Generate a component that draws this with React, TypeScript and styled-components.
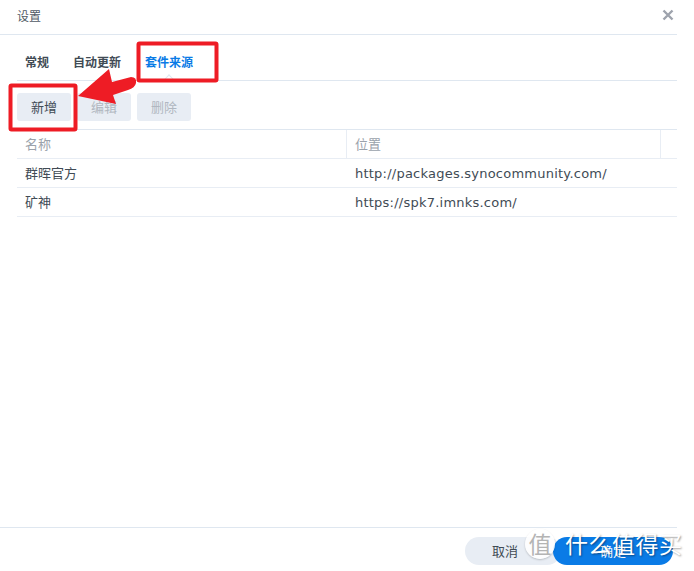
import React from "react";
import styled, { createGlobalStyle } from "styled-components";

const GlobalStyle = createGlobalStyle`
  *, *::before, *::after {
    box-sizing: border-box;
  }
  html, body {
    margin: 0;
    padding: 0;
    background: #fff;
  }
  body {
    font-family: "Liberation Sans", "Noto Sans CJK SC", sans-serif;
  }
`;

const Window = styled.div`
  position: relative;
  width: 694px;
  height: 571px;
  display: flex;
  flex-direction: column;
  overflow: hidden;
  background: #fff;
  color: #414b55;
  font-family: "DejaVu Sans", "Noto Sans CJK SC", sans-serif;
  font-size: 13px;
`;

const TitleBar = styled.header`
  height: 35px;
  margin-right: 17px;
  padding: 0 3px 4px 17px;
  display: flex;
  align-items: center;
  justify-content: space-between;
  border-bottom: 1px solid #dfe7f0;
  font-size: 12px;
  color: #505a64;
`;

const CloseButton = styled.span`
  display: flex;
  color: #9ea3ad;
`;

const Body = styled.main`
  flex: 1;
  padding: 0 17px;
  display: flex;
  flex-direction: column;
`;

const Tabs = styled.nav`
  height: 46px;
  display: flex;
  gap: 24px;
  padding-left: 8px;
  border-bottom: 1px solid #dfe7f0;
`;

const Tab = styled.span<{ $active?: boolean }>`
  position: relative;
  padding-top: 21px;
  font-size: 12px;
  font-weight: 700;
  line-height: 14px;
  color: ${({ $active }) => ($active ? "#0a7be6" : "#414b55")};

  ${({ $active }) =>
    $active &&
    `
    &::after {
      content: "";
      position: absolute;
      left: 20px;
      bottom: -4px;
      width: 8px;
      height: 8px;
      background: #fff;
      border: 1px solid #dfe7f0;
      border-right: 0;
      border-bottom: 0;
      transform: rotate(45deg);
    }
  `}
`;

const Toolbar = styled.div`
  display: flex;
  gap: 6px;
  padding: 12px 0 8px;
`;

const ToolButton = styled.button<{ $disabled?: boolean }>`
  width: 54px;
  height: 28px;
  padding: 0 0 2px;
  border: 0;
  border-radius: 3px;
  background: #e8edf4;
  font-family: inherit;
  font-size: 13px;
  color: ${({ $disabled }) => ($disabled ? "#b0b7c0" : "#414b55")};
`;

const Table = styled.div`
  border-top: 1px solid #dfe7f0;
`;

const Row = styled.div<{ $head?: boolean }>`
  height: 29px;
  display: grid;
  grid-template-columns: 330px 314px 17px;
  align-items: center;
  border-bottom: 1px solid #e8edf4;
  color: ${({ $head }) => ($head ? "#9aa2ab" : "#414b55")};
`;

const Cell = styled.div<{ $head?: boolean }>`
  height: 100%;
  padding: 0 0 2px 8px;
  display: flex;
  align-items: center;
  white-space: nowrap;
  border-right: ${({ $head }) => ($head ? "1px solid #e8edf4" : "0")};
`;

const UrlCell = styled(Cell)`
  padding-bottom: 0;
  letter-spacing: 0.23px;
`;

const Footer = styled.footer`
  height: 44px;
  margin-right: 17px;
  padding: 9px 4px 0 0;
  display: flex;
  justify-content: flex-end;
  border-top: 1px solid #dfe7f0;
`;

const PillButton = styled.button<{ $primary?: boolean }>`
  position: relative;
  height: 28px;
  padding: ${({ $primary }) => ($primary ? "0 0 2px" : "0 16px 2px 0")};
  border: 0;
  border-radius: 14px;
  font-family: inherit;
  font-size: 13px;
  background: ${({ $primary }) => ($primary ? "#0a7be6" : "#e8edf4")};
  color: ${({ $primary }) => ($primary ? "#fff" : "#414b55")};
  width: ${({ $primary }) => ($primary ? "120px" : "96px")};
  margin-left: ${({ $primary }) => ($primary ? "-8px" : "0")};
`;

const Annotation = styled.svg`
  position: absolute;
  inset: 0;
  pointer-events: none;
`;

const WatermarkBadge = styled.span`
  position: absolute;
  left: 525px;
  top: 529px;
  width: 30px;
  height: 30px;
  padding-bottom: 3px;
  border-radius: 50%;
  background: rgba(255, 255, 255, 0.88);
  box-shadow: 0 1px 2px rgba(0, 0, 0, 0.2);
  display: flex;
  align-items: center;
  justify-content: center;
  font-family: "Noto Sans CJK SC", sans-serif;
  font-size: 23px;
  color: #b4b4b4;
`;

const WatermarkText = styled.span`
  position: absolute;
  left: 565px;
  top: 526px;
  font-family: "Noto Sans CJK SC", sans-serif;
  font-size: 23px;
  line-height: 34px;
  letter-spacing: 0.5px;
  white-space: nowrap;
  color: #fff;
  text-shadow: 1px 1px 2px rgba(0, 0, 0, 0.4);
`;

const rows = [
  { name: "群晖官方", url: "http://packages.synocommunity.com/" },
  { name: "矿神", url: "https://spk7.imnks.com/" },
];

const App = () => {
  return (
    <Window>
      <GlobalStyle />
      <TitleBar>
        设置
        <CloseButton>
          <svg width="12" height="12" viewBox="0 0 12 12">
            <path d="M1.5 1.5 L10.5 10.5 M10.5 1.5 L1.5 10.5" stroke="currentColor" strokeWidth="2.4" />
          </svg>
        </CloseButton>
      </TitleBar>
      <Body>
        <Tabs>
          <Tab>常规</Tab>
          <Tab>自动更新</Tab>
          <Tab $active>套件来源</Tab>
        </Tabs>
        <Toolbar>
          <ToolButton>新增</ToolButton>
          <ToolButton $disabled>编辑</ToolButton>
          <ToolButton $disabled>删除</ToolButton>
        </Toolbar>
        <Table>
          <Row $head>
            <Cell $head>名称</Cell>
            <Cell $head>位置</Cell>
            <Cell />
          </Row>
          {rows.map((row) => (
            <Row key={row.name}>
              <Cell>{row.name}</Cell>
              <UrlCell>{row.url}</UrlCell>
              <Cell />
            </Row>
          ))}
        </Table>
      </Body>
      <Footer>
        <PillButton>取消</PillButton>
        <PillButton $primary>确定</PillButton>
      </Footer>
      <Annotation width="694" height="571" viewBox="0 0 694 571">
        <rect x="138.5" y="43.5" width="78" height="37" rx="1" fill="none" stroke="#ee1c25" strokeWidth="4" />
        <rect x="10.5" y="85.5" width="65" height="44" rx="1" fill="none" stroke="#ee1c25" strokeWidth="4" />
        <path
          d="M78 96 L109 69 L112 82 L131 77 Q137 77 136 83 Q135 88 128 90 L113 95 L116 104 Z"
          fill="#ee1c25"
        />
      </Annotation>
      <WatermarkBadge>值</WatermarkBadge>
      <WatermarkText>什么值得买</WatermarkText>
    </Window>
  );
};

export default App;
